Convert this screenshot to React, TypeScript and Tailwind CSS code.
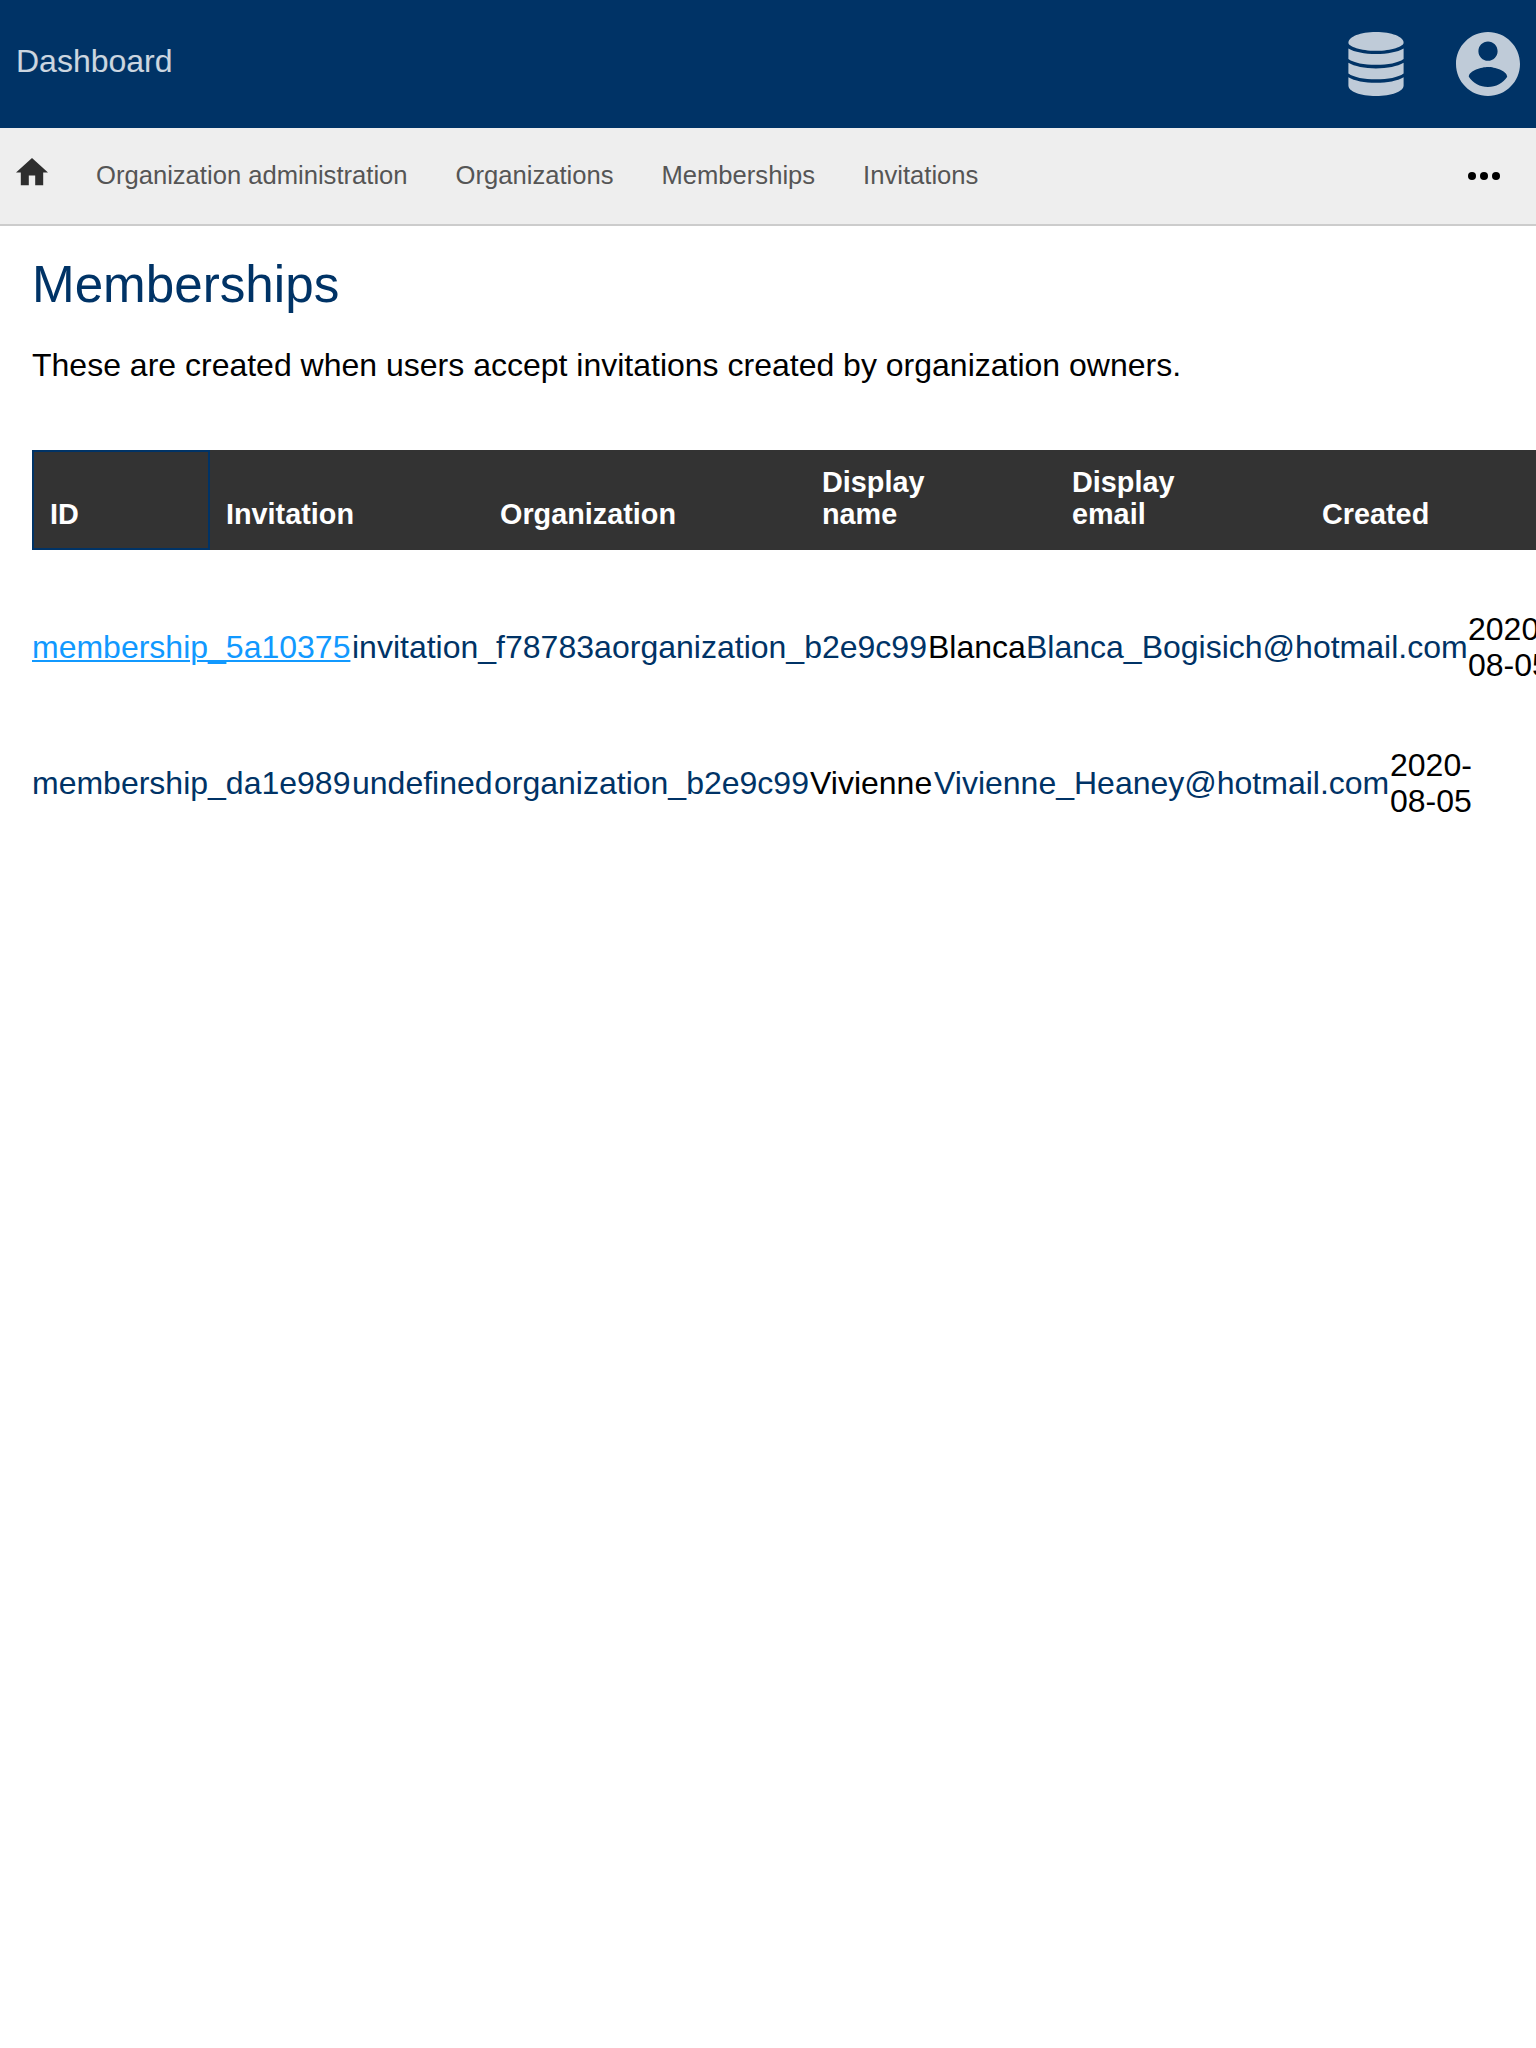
const navItems = ["Organization administration", "Organizations", "Memberships", "Invitations"];

const columns = [
  { label: "ID", width: "w-[178px] border-2 border-[#003366]" },
  { label: "Invitation", width: "w-[274px] border-y-2 border-[#333]" },
  { label: "Organization", width: "w-[322px] border-y-2 border-[#333]" },
  { label: "Display name", width: "w-[250px] border-y-2 border-[#333]" },
  { label: "Display email", width: "w-[250px] border-y-2 border-[#333]" },
  { label: "Created", width: "w-[250px] border-y-2 border-[#333]" },
];

const rows = [
  {
    id: "membership_5a10375",
    invitation: "invitation_f78783a",
    organization: "organization_b2e9c99",
    name: "Blanca",
    email: "Blanca_Bogisich@hotmail.com",
    active: true,
    grid: "grid-cols-[320px_260px_316px_98px_442px_82px]",
  },
  {
    id: "membership_da1e989",
    invitation: "undefined",
    organization: "organization_b2e9c99",
    name: "Vivienne",
    email: "Vivienne_Heaney@hotmail.com",
    active: false,
    grid: "grid-cols-[320px_142px_316px_124px_456px_82px]",
  },
];

function DatabaseIcon() {
  return (
    <svg className="h-16 w-14" viewBox="0 0 56 64" fill="currentColor">
      <path d="M28 0C43.500 0 55.600 4.600 55.600 10.700C55.600 14.500 43.500 18.800 28 18.800S.4 14.500 .4 10.700C.4 4.600 12.500 0 28 0Z" />
      <path d="M.4 16.400C6.500 20 16.500 21.900 28 21.900S49.500 20 55.600 16.400V27C50 31 40 32.800 28 32.800S6 31 .4 27Z" />
      <path d="M.4 30.800C6.500 34.400 16.500 36.400 28 36.400S49.500 34.400 55.600 30.800V41.500C50 45.500 40 47.300 28 47.300S6 45.500 .4 41.500Z" />
      <path d="M.4 45.200C6.500 48.800 16.500 50.800 28 50.800S49.500 48.800 55.600 45.200V53.500C55.600 59.500 43.500 64 28 64S.4 59.500 .4 53.500Z" />
    </svg>
  );
}

function AccountIcon() {
  return (
    <svg className="size-16" viewBox="2 2 20 20" fill="currentColor">
      <path d="M12 2C6.48 2 2 6.48 2 12s4.48 10 10 10 10-4.48 10-10S17.52 2 12 2zm0 3c1.66 0 3 1.34 3 3s-1.340 3-3 3-3-1.340-3-3 1.340-3 3-3zm0 14.200c-2.500 0-4.710-1.280-6-3.220.03-1.990 4-3.080 6-3.080 1.990 0 5.970 1.090 6 3.080-1.290 1.940-3.500 3.220-6 3.220z" />
    </svg>
  );
}

export default function App() {
  return (
    <div className="min-h-[2048px] w-full overflow-hidden bg-white font-['Liberation_Sans',Arial,sans-serif] text-[32px] leading-9 text-black">
      <header className="flex h-32 items-center justify-between bg-[#003366] px-4">
        <span className="-mt-1.5 text-white/80">Dashboard</span>
        <div className="flex gap-[52px] text-white/75">
          <DatabaseIcon />
          <AccountIcon />
        </div>
      </header>

      <nav className="flex h-[98px] items-center border-b-2 border-[#ccc] bg-[#eee] px-4 text-[25.6px] text-[#555]">
        <svg className="-mt-2 h-[27.2px] w-8 text-[#2e2e2e]" viewBox="2 3 20 17" fill="currentColor">
          <path d="M10 20v-6h4v6h5v-8h3L12 3 2 12h3v8z" />
        </svg>
        <div className="-mt-0.5 ml-12 flex gap-12">
          {navItems.map((item) => (
            <a key={item}>{item}</a>
          ))}
        </div>
        <svg className="mr-5 ml-auto h-2 w-8 text-black" viewBox="0 0 32 8" fill="currentColor">
          <circle cx="4" cy="4" r="4" />
          <circle cx="16" cy="4" r="4" />
          <circle cx="28" cy="4" r="4" />
        </svg>
      </nav>

      <main className="pl-8">
        <h1 className="pt-[30px] text-[51.2px] leading-[58px] text-[#003366]">Memberships</h1>
        <p className="mt-[33px]">These are created when users accept invitations created by organization owners.</p>

        <div className="mt-[67px] flex h-[100px] w-[1524px] bg-[#333] text-[28.8px] leading-8 font-bold text-white">
          {columns.map((c) => (
            <div key={c.label} className={`flex shrink-0 items-end px-4 pb-[18px] ${c.width}`}>
              <span>
                {c.label.split(" ").map((w) => (
                  <span key={w} className="block">{w}</span>
                ))}
              </span>
            </div>
          ))}
        </div>

        <div className="pt-[29px]">
          {rows.map((r) => (
            <div key={r.id} className={`grid h-[136px] items-center text-[#003366] ${r.grid}`}>
              <a className={r.active ? "text-[#1199ff] underline decoration-2 underline-offset-2" : ""}>{r.id}</a>
              <a>{r.invitation}</a>
              <a>{r.organization}</a>
              <span className="text-black">{r.name}</span>
              <a>{r.email}</a>
              <span className="text-black">2020-<br />08-05</span>
            </div>
          ))}
        </div>
      </main>
    </div>
  );
}
